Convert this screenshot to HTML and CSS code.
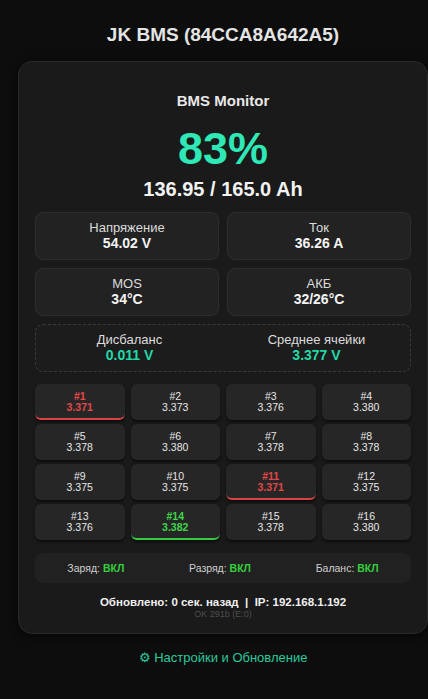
FILE: index.html
```html
<!DOCTYPE html>
<html lang="ru">
<head>
<meta charset="utf-8">
<title>JK BMS</title>
<link rel="stylesheet" href="styles.css">
</head>
<body>
<div class="page">
  <h1 class="title">JK BMS (84CCA8A642A5)</h1>
  <div class="card">
    <h2 class="card-title">BMS Monitor</h2>
    <div class="soc">83%</div>
    <div class="capacity">136.95 / 165.0 Ah</div>

    <div class="stats">
      <div class="stat"><div class="label">Напряжение</div><div class="value">54.02 V</div></div>
      <div class="stat"><div class="label">Ток</div><div class="value">36.26 A</div></div>
      <div class="stat"><div class="label">MOS</div><div class="value">34°C</div></div>
      <div class="stat"><div class="label">АКБ</div><div class="value">32/26°C</div></div>
    </div>

    <div class="summary">
      <div class="sum-item"><div class="label">Дисбаланс</div><div class="value teal">0.011 V</div></div>
      <div class="sum-item"><div class="label">Среднее ячейки</div><div class="value teal">3.377 V</div></div>
    </div>

    <div class="cells">
      <div class="cell low"><div class="num">#1</div><div class="volt">3.371</div></div>
      <div class="cell"><div class="num">#2</div><div class="volt">3.373</div></div>
      <div class="cell"><div class="num">#3</div><div class="volt">3.376</div></div>
      <div class="cell"><div class="num">#4</div><div class="volt">3.380</div></div>
      <div class="cell"><div class="num">#5</div><div class="volt">3.378</div></div>
      <div class="cell"><div class="num">#6</div><div class="volt">3.380</div></div>
      <div class="cell"><div class="num">#7</div><div class="volt">3.378</div></div>
      <div class="cell"><div class="num">#8</div><div class="volt">3.378</div></div>
      <div class="cell"><div class="num">#9</div><div class="volt">3.375</div></div>
      <div class="cell"><div class="num">#10</div><div class="volt">3.375</div></div>
      <div class="cell low"><div class="num">#11</div><div class="volt">3.371</div></div>
      <div class="cell"><div class="num">#12</div><div class="volt">3.375</div></div>
      <div class="cell"><div class="num">#13</div><div class="volt">3.376</div></div>
      <div class="cell high"><div class="num">#14</div><div class="volt">3.382</div></div>
      <div class="cell"><div class="num">#15</div><div class="volt">3.378</div></div>
      <div class="cell"><div class="num">#16</div><div class="volt">3.380</div></div>
    </div>

    <div class="status">
      <span>Заряд: <b class="on">ВКЛ</b></span>
      <span>Разряд: <b class="on">ВКЛ</b></span>
      <span>Баланс: <b class="on">ВКЛ</b></span>
    </div>

    <div class="updated">Обновлено: 0 сек. назад &nbsp;|&nbsp; IP: 192.168.1.192</div>
    <div class="diag">OK 291b (E:0)</div>
  </div>
  <a class="settings" href="#">⚙ Настройки и Обновление</a>
</div>
</body>
</html>
```
FILE: styles.css
```css
* { box-sizing: border-box; }

body {
  margin: 0;
  background: #0d0d0d;
  color: #e6e6e6;
  font-family: "Liberation Sans", Arial, sans-serif;
}

.page {
  width: 410px;
  margin-left: 18px;
  text-align: center;
}

.title {
  margin: 0;
  padding-top: 23px;
  font-size: 19px;
  line-height: 24px;
  font-weight: bold;
  color: #e4e4e4;
}

.card {
  margin-top: 14px;
  background: #1a1a1a;
  border: 1px solid #2a2a2a;
  border-radius: 14px;
  padding: 30px 16px 14px;
  box-shadow: 0 2px 8px rgba(0, 0, 0, 0.6);
}

.card-title {
  margin: 0;
  font-size: 15px;
  line-height: 17px;
  color: #e8e8e8;
}

.soc {
  margin-top: 17px;
  font-size: 45px;
  line-height: 46px;
  font-weight: bold;
  color: #2ee8b6;
}

.capacity {
  margin-top: 5px;
  font-size: 20px;
  line-height: 24px;
  font-weight: bold;
  color: #f2f2f2;
}

.stats {
  margin-top: 11px;
  display: grid;
  grid-template-columns: 1fr 1fr;
  gap: 8px;
}

.stat {
  height: 48px;
  background: #222;
  border: 1px solid #2e2e2e;
  border-radius: 8px;
  display: flex;
  flex-direction: column;
  justify-content: center;
  padding-bottom: 2px;
}

.label {
  font-size: 13px;
  line-height: 15px;
  color: #dcdcdc;
}

.value {
  font-size: 14px;
  line-height: 16px;
  font-weight: bold;
  color: #f4f4f4;
}

.value.teal { color: #22d9a6; }

.summary {
  margin-top: 8px;
  height: 48px;
  border: 1px dashed #3a3a3a;
  border-radius: 8px;
  background: #1c1c1c;
  display: grid;
  grid-template-columns: 1fr 1fr;
  align-items: center;
  padding-bottom: 2px;
}

.cells {
  margin-top: 12px;
  display: grid;
  grid-template-columns: repeat(4, 1fr);
  gap: 4px 6px;
}

.cell {
  height: 36px;
  background: #262626;
  border-radius: 6px;
  box-shadow: 0 2px 3px rgba(0, 0, 0, 0.55);
  display: flex;
  flex-direction: column;
  justify-content: center;
  font-size: 10.5px;
  line-height: 11.5px;
  color: #e6e6e6;
}

.cell.low {
  color: #e24848;
  font-weight: bold;
  border-bottom: 2px solid #d84444;
  padding-top: 2px;
}

.cell.high {
  color: #3fd64a;
  font-weight: bold;
  border-bottom: 2px solid #36c942;
  padding-top: 2px;
}

.status {
  margin-top: 13px;
  height: 30px;
  background: #212121;
  border-radius: 8px;
  display: flex;
  align-items: center;
  justify-content: space-around;
  font-size: 10.5px;
  color: #cfcfcf;
}

.on { color: #35d03c; }

.updated {
  margin-top: 12px;
  font-size: 11.5px;
  line-height: 14px;
  font-weight: bold;
  color: #f0f0f0;
}

.diag {
  font-size: 9px;
  line-height: 10px;
  color: #4e4e4e;
}

.settings {
  display: block;
  margin-top: 16px;
  font-size: 13px;
  line-height: 16px;
  color: #2bc99c;
  text-decoration: none;
}
```
